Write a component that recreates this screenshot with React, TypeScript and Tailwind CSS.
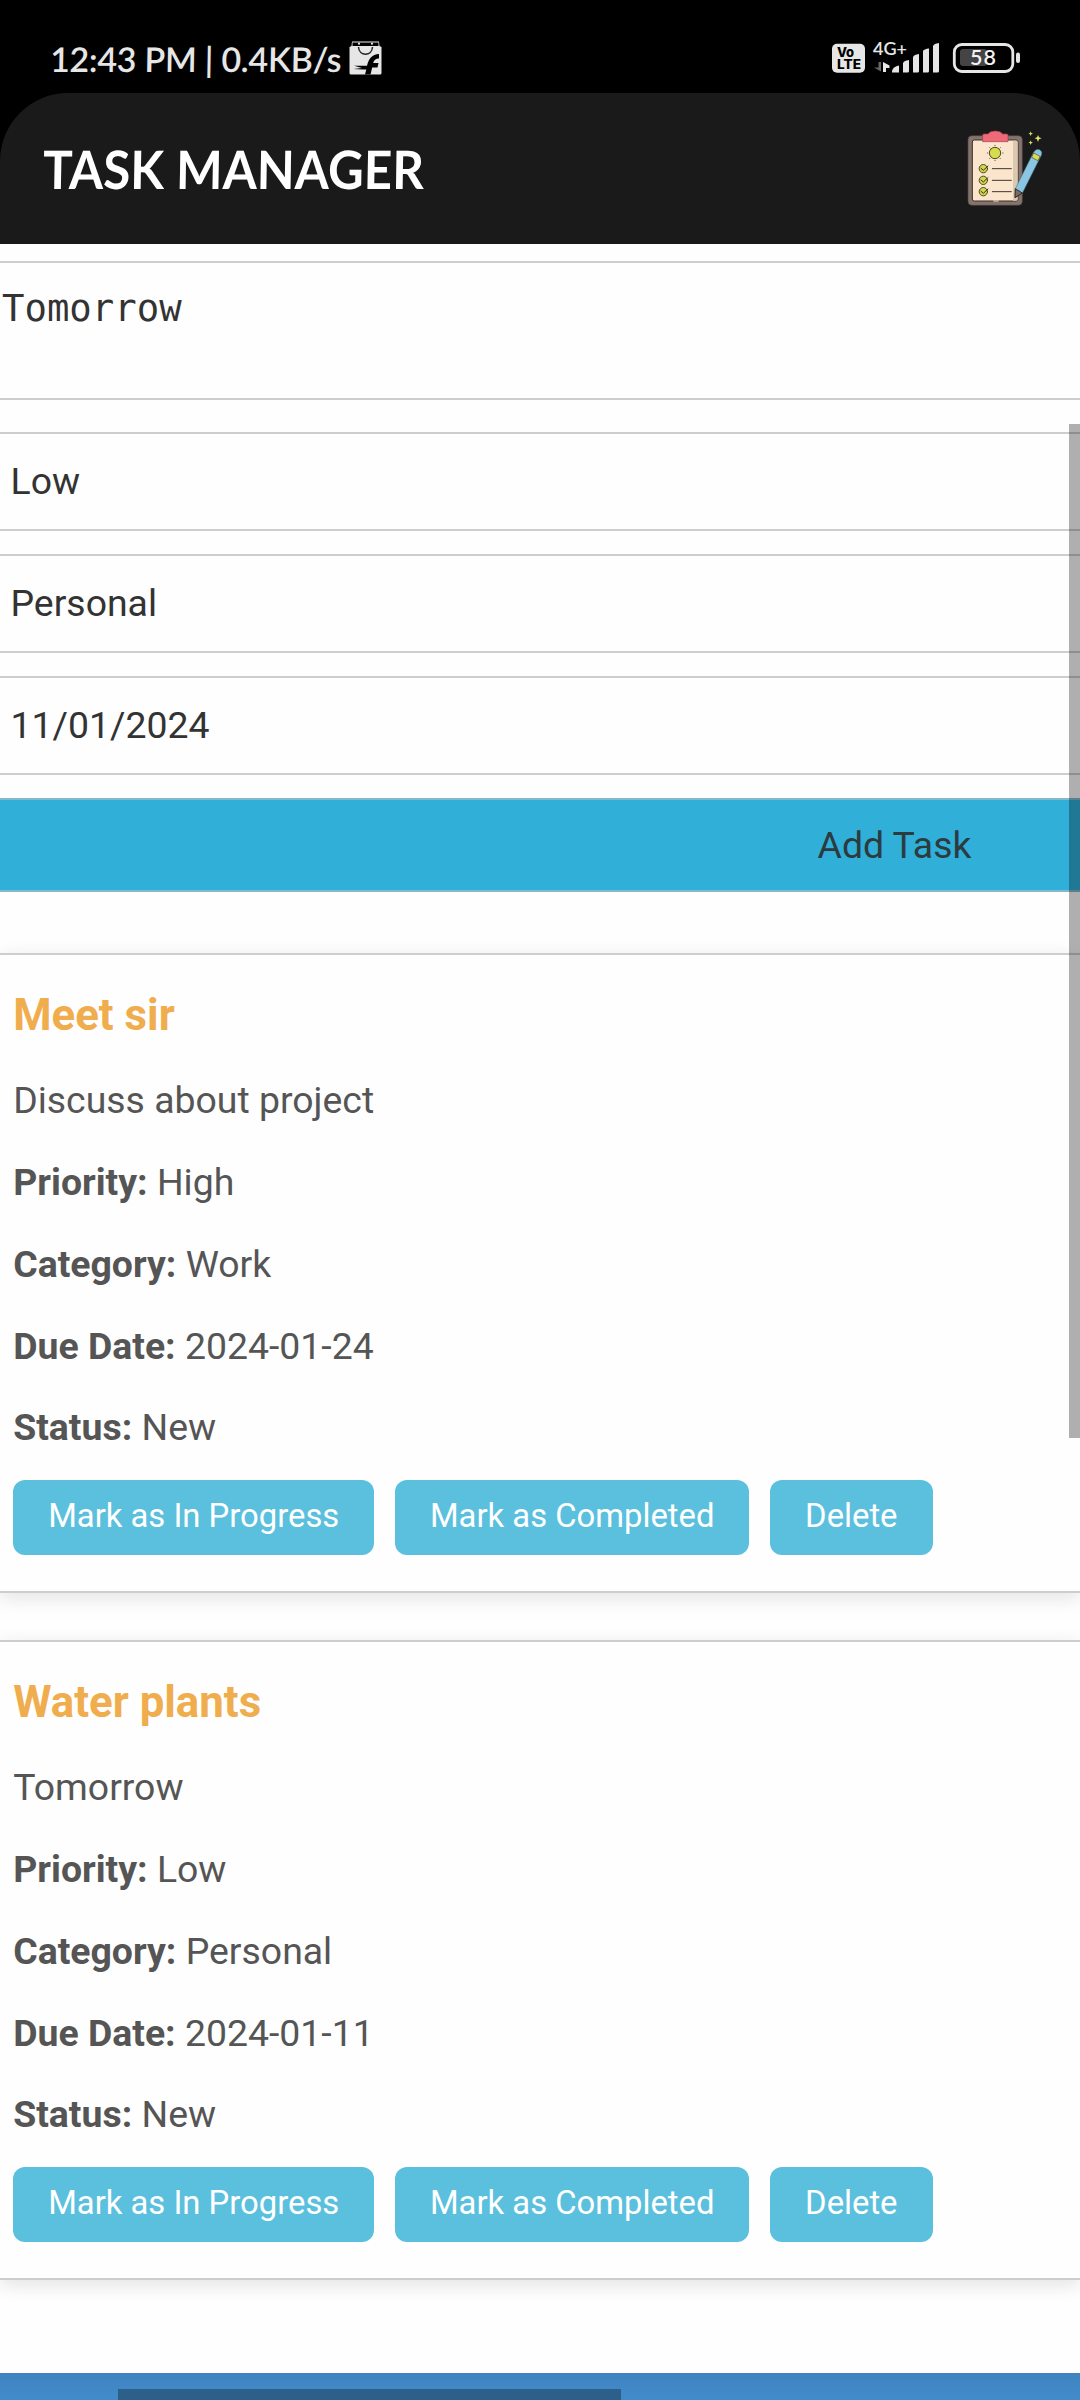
import React from "react";

type Task = {
  title: string;
  description: string;
  priority: string;
  category: string;
  due: string;
  status: string;
};

const tasks: Task[] = [
  { title: "Meet sir", description: "Discuss about project", priority: "High", category: "Work", due: "2024-01-24", status: "New" },
  { title: "Water plants", description: "Tomorrow", priority: "Low", category: "Personal", due: "2024-01-11", status: "New" },
];

function BagIcon() {
  return (
    <svg width="33" height="34" viewBox="0 0 33 34" className="ml-[8px] mt-[41px] shrink-0">
      <path d="M3 0.5H30L30.5 5L32.5 6V32Q32.5 33.5 31 33.5H2Q0.5 33.5 0.5 32V6L2.500 5Z" fill="#e6e6e6" />
      <path d="M3.500 1.500H29.500V5H3.500Z" fill="#000" />
      <circle cx="10" cy="2.700" r="1.100" fill="#e6e6e6" />
      <circle cx="23" cy="2.700" r="1.100" fill="#e6e6e6" />
      <path d="M9.500 6C10 15.500 23 15.500 23.500 6" fill="none" stroke="#222" strokeWidth="1.500" />
      <path d="M16 33.500L17.300 28.500H14L4.500 28L13 27L5 24.800H18C20 17 23 13.500 30 13V17.500C26.500 17.500 25 19 24.200 22H29.500L28.500 26.500H23.200L21.500 33.500Z" fill="#000" />
    </svg>
  );
}

function StatusIcons() {
  return (
    <svg width="190" height="32" viewBox="0 0 190 32" className="mt-[41px] mr-[58px] shrink-0 overflow-visible">
      <g fill="#e6e6e6">
        <rect x="0" y="2.700" width="33" height="29" rx="5" />
        <text x="5" y="16" fontFamily="Inter" fontWeight="800" fontSize="13" fill="#000" textLength="17">Vo</text>
        <text x="5" y="28" fontFamily="Inter" fontWeight="800" fontSize="13" fill="#000" textLength="24" lengthAdjust="spacingAndGlyphs">LTE</text>
        <text x="41" y="13.800" fontFamily="Lato" fontWeight="600" fontSize="18" textLength="34" lengthAdjust="spacingAndGlyphs">4G+</text>
        <path d="M46.500 21H49V30.500L42 26.500H46.500Z" fill="#666" />
        <path d="M51 21L57.500 24.500V27H54V31H51Z" />
        <path d="M60 31.500V30Q61 25.500 67 24.500V31.500Z" />
        <path d="M71 31.500V22Q72 19.500 77 19V30Q77 31.500 75.500 31.500Z" />
        <path d="M81 31.500V16Q82 13.500 87 13V30Q87 31.500 85.500 31.500Z" />
        <path d="M91 31.500V10Q92 8 97 7.500V30Q97 31.500 95.500 31.500Z" />
        <path d="M101 31.500V5Q102 2.500 107 2V30Q107 31.500 105.500 31.500Z" />
      </g>
      <rect x="122.300" y="3.500" width="58.500" height="27" rx="7.500" fill="none" stroke="#e6e6e6" strokeWidth="2.800" />
      <rect x="128" y="8" width="27" height="17" rx="3" fill="#444" />
      <rect x="184" y="11.500" width="4" height="10.500" rx="2" fill="#e6e6e6" />
      <text x="138" y="24" fontFamily="Lato" fontWeight="600" fontSize="21.500" fill="#f2f2f2" textLength="26">58</text>
    </svg>
  );
}

function ClipboardLogo() {
  return (
    <svg width="120" height="110" viewBox="0 0 360 330" className="mt-[17px] mr-[20px] shrink-0">
      <rect x="84" y="77" width="163" height="209" rx="12" fill="#84746d" stroke="#4b403c" strokeWidth="2" />
      <rect x="97" y="90" width="137" height="183" rx="6" fill="#fbe6cd" stroke="#3a302d" strokeWidth="3" />
      <path d="M219 92H229Q233 92 233 97V267Q233 272 229 272H219Z" fill="#dcc8ae" />
      <path d="M160 273H176" stroke="#d8cbb9" strokeWidth="4" />
      <path d="M128 95V76Q128 72 132 72H144Q150 63 166 63Q182 63 188 72H200Q204 72 204 76V95Z" fill="#ef6a79" stroke="#9c434c" strokeWidth="2" />
      <g stroke="#6b6034" strokeWidth="3" strokeLinecap="round">
        <path d="M165 106v1M165 151v1M142 129h1M188 129h1M149 113l1 1M181 113l-1 1M149 146l1-1M181 146l-1-1" />
      </g>
      <circle cx="165" cy="129" r="17" fill="#d5dd4d" stroke="#4d4a23" strokeWidth="3" />
      {[176, 211, 245].map((y) => (
        <g key={y} fill="none" strokeLinecap="round">
          <circle cx="130" cy={y} r="12.500" fill="#d0d64c" stroke="#4d4a23" strokeWidth="3" />
          <path d={`M123 ${y - 1}l7 6l14 -13`} stroke="#3a3420" strokeWidth="3" />
          <path d={`M157 ${y}H214`} stroke="#40352f" strokeWidth="3" />
        </g>
      ))}
      <path d="M226 236L281 126Q288 115 299 119Q309 125 304 136L247 250L225 263Z" fill="#8ac6e3" stroke="#42606e" strokeWidth="1.500" />
      <path d="M281 129L300 139L294 152L275 142Z" fill="#d8de54" stroke="#4d4a23" strokeWidth="2" />
      <path d="M226 236L247 249L225 263Z" fill="#7b6a63" stroke="#332a27" strokeWidth="3" strokeLinejoin="round" />
      <g fill="#e2e265">
        <path d="M272 64L274 69L279 71L274 73L272 78L270 73L265 71L270 69Z" />
        <path d="M294 75L297 82L305 85L297 88L294 96L291 88L284 85L291 82Z" />
        <path d="M272 91L274 96L279 98L274 100L272 105L270 100L265 98L270 96Z" />
      </g>
    </svg>
  );
}

function Field({ children }: { children: React.ReactNode }) {
  return (
    <div className="mb-[22.800px] flex h-[99px] items-center border-y-2 border-[#cecece] pb-[1px] pl-[10.500px] text-[37.400px] text-[#333]">
      {children}
    </div>
  );
}

function Row({ label, value }: { label: string; value: string }) {
  return (
    <p>
      <strong className="font-bold">{label}:</strong> {value}
    </p>
  );
}

function TaskCard({ task }: { task: Task }) {
  return (
    <article className="mb-[47px] h-[640px] border-y-2 border-[#cecece] bg-[#fefefe] pl-[13.200px] pt-[34.500px] shadow-[0_5px_18px_rgba(0,0,0,0.11)]">
      <h3 className="text-[43.800px] leading-[52px] font-bold text-[#f0ad4e]">{task.title}</h3>
      <div className="mt-[37.800px] flex flex-col gap-[39.800px] text-[37.400px] leading-[42px] text-[#555]">
        <p>{task.description}</p>
        <Row label="Priority" value={task.priority} />
        <Row label="Category" value={task.category} />
        <Row label="Due Date" value={task.due} />
        <Row label="Status" value={task.status} />
      </div>
      <div className="mt-[31.500px] flex gap-[20.700px] text-[32.800px] text-white">
        {["Mark as In Progress", "Mark as Completed", "Delete"].map((label) => (
          <button key={label} className="flex h-[75.500px] items-center rounded-[12px] bg-[#5bc0de] px-[35px] pb-[3px]">
            {label}
          </button>
        ))}
      </div>
    </article>
  );
}

export default function App() {
  return (
    <div className="relative flex h-[2400px] w-[1080px] flex-col overflow-hidden bg-[#fefefe] font-['Roboto',sans-serif]">
      <div className="shrink-0 bg-black">
        <div className="flex h-[93px] justify-between">
          <div className="flex pl-[50px]">
            <span className="mt-[37px] -skew-x-1 font-['Lato',sans-serif] text-[34px] leading-[44px] font-semibold tracking-[-0.27px] whitespace-pre text-[#e6e6e6]">12:43 PM | 0.4KB/s</span>
            <BagIcon />
          </div>
          <StatusIcons />
        </div>
        <header className="flex h-[151px] justify-between rounded-t-[68px] bg-[#1a1a1a]">
          <h1 className="mt-[44px] ml-[43px] h-[64px] origin-left scale-x-[0.93] -skew-x-1 font-['Lato',sans-serif] text-[53px] leading-[64px] font-bold text-white">TASK MANAGER</h1>
          <ClipboardLogo />
        </header>
      </div>

      <main className="shrink-0 pt-[17px]">
        <div className="mb-[32px] h-[139px] border-y-2 border-[#cecece] pt-[21px] pl-[2px] font-['DejaVu_Sans_Mono',monospace] text-[37.300px] leading-[48px] text-[#333]">
          Tomorrow
        </div>
        <Field>Low</Field>
        <Field>Personal</Field>
        <Field>11/01/2024</Field>
        <button className="mt-[23.400px] flex h-[94px] w-full items-center border-y-2 border-[#83b9cb] bg-[#30afd8] pl-[817.500px] text-[37.400px] text-[#2c3b40]">
          Add Task
        </button>
        <section className="mt-[61px]">
          {tasks.map((task) => (
            <TaskCard key={task.title} task={task} />
          ))}
        </section>
      </main>

      <footer className="mt-[46px] flex-1 bg-linear-to-b from-[#3f84c0] to-[#428bca] pt-[16px] pl-[118px]">
        <div className="h-[11px] w-[503px] bg-[#2d5f8b]" />
      </footer>

      <div className="absolute top-[424px] right-0 h-[1014px] w-[11px] bg-black/31" />
    </div>
  );
}
